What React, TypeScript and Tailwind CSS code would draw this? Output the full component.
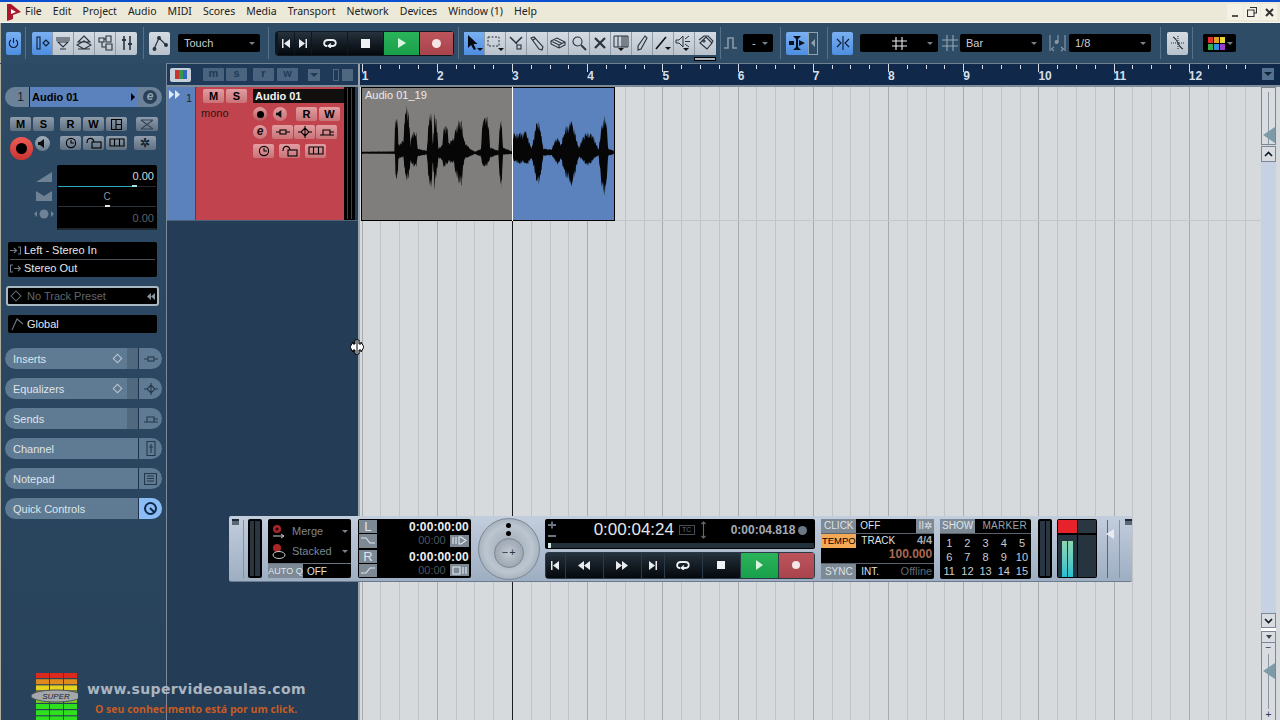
import type { ReactNode } from "react";

const bars = Array.from({ length: 12 }, (_, i) => i + 1);
const subs = [0, 1, 2, 3];
const menu = ["File", "Edit", "Project", "Audio", "MIDI", "Scores", "Media", "Transport", "Network", "Devices", "Window (1)", "Help"];

// envelope of the clip, [x, top, bottom]
const env: number[][] = [
  [20, 215, 221], [118, 214, 222], [120, 110, 225], [122, 105, 318], [128, 95, 300], [130, 190, 240], [145, 180, 230], [150, 80, 290],
  [155, 68, 310], [162, 90, 300], [166, 190, 250], [170, 155, 258], [184, 155, 262], [188, 205, 230], [215, 212, 224], [222, 100, 320],
  [228, 85, 335], [234, 190, 250], [238, 90, 340], [244, 100, 300], [250, 205, 235], [262, 190, 245], [268, 125, 270], [276, 130, 255],
  [282, 185, 250], [296, 170, 250], [305, 130, 300], [312, 105, 325], [320, 120, 320], [328, 180, 240], [345, 205, 230], [360, 215, 222],
  [378, 205, 232], [382, 120, 260], [392, 95, 265], [400, 110, 255], [405, 200, 235], [430, 212, 224], [435, 115, 320], [440, 112, 332],
  [444, 200, 225], [470, 214, 222], [472, 160, 240], [490, 155, 255], [512, 152, 250], [518, 165, 258], [530, 205, 235], [542, 130, 300],
  [550, 115, 322], [558, 150, 290], [565, 205, 228], [590, 208, 226], [600, 175, 245], [606, 168, 258], [618, 190, 240], [628, 150, 280],
  [640, 125, 310], [650, 120, 322], [660, 150, 290], [672, 205, 230], [682, 165, 245], [700, 152, 262], [716, 165, 240], [730, 208, 226],
  [742, 120, 340], [748, 95, 365], [754, 120, 320], [760, 205, 228], [778, 212, 222],
];

function wavePoints() {
  const top: string[] = [];
  const bot: string[] = [];
  for (let i = 0; i < env.length - 1; i++) {
    const [x0, t0, b0] = env[i];
    const [x1, t1, b1] = env[i + 1];
    for (let x = x0; x < x1; x += 1.5) {
      const k = (x - x0) / (x1 - x0);
      const t = t0 + (t1 - t0) * k;
      const b = b0 + (b1 - b0) * k;
      const j = Math.sin(x * 2.3) * 0.6 + Math.sin(x * 0.71) * 0.4;
      top.push(`${x},${(t + Math.abs(j) * (216 - t) * 0.42).toFixed(1)}`);
      bot.unshift(`${x},${(b - Math.abs(j) * (b - 220) * 0.42).toFixed(1)}`);
    }
  }
  return [...top, ...bot].join(" ");
}

function Ico({ w = 16, h = 16, children, className = "" }: { w?: number; h?: number; children: ReactNode; className?: string }) {
  return (
    <svg width={w} height={h} viewBox={`0 0 ${w} ${h}`} fill="none" stroke="currentColor" strokeWidth="1.1" className={className}>
      {children}
    </svg>
  );
}

function Sep({ ml }: { ml: string }) {
  return <div className={`w-px h-[32px] bg-[#56708a] ${ml}`} />;
}

function Drop({ w, ml, children }: { w: string; ml: string; children?: ReactNode }) {
  return (
    <div className={`h-[18px] bg-black rounded-[2px] flex items-center pl-[6px] pr-[5px] text-[11px] text-[#c9ced4] ${w} ${ml}`}>
      <div className="flex-1 flex items-center">{children}</div>
      <div className="w-0 h-0 border-x-[3.5px] border-x-transparent border-t-[3px] border-t-[#77818c]" />
    </div>
  );
}

function TB({ on, children, last }: { on?: boolean; children: ReactNode; last?: boolean }) {
  return (
    <div
      className={`w-[21px] h-[23px] flex items-center justify-center ${last ? "" : "border-r border-[#8e9aa7]"} ${
        on ? "bg-gradient-to-b from-[#7ab0f2] to-[#4d8ee0] text-[#0b1c33]" : "bg-gradient-to-b from-[#d5dbe2] to-[#b9c2cc] text-[#27333f]"
      }`}
    >
      {children}
    </div>
  );
}

function Toolbar() {
  return (
    <div className="h-[40px] shrink-0 bg-[#2f4c67] border-l border-[#b1ad9b] flex items-center">
      <div className="ml-[5px] w-[15px] h-[23px] rounded-[2px] bg-gradient-to-b from-[#7ab0f2] to-[#4d8ee0] flex items-center justify-center text-[#0b1c33]">
        <Ico w={11} h={12}>
          <path d="M3 3 A4.2 4.2 0 1 0 8 3 M5.5 1 V6" />
        </Ico>
      </div>
      <Sep ml="ml-[4px]" />
      <div className="ml-[6px] flex rounded-[2px] overflow-hidden">
        <TB on>
          <Ico>
            <path d="M3 2 H6 V14 H3 Z" />
            <path d="M9 8 L12 5 L15 8 L12 11 Z" />
          </Ico>
        </TB>
        <TB>
          <Ico>
            <path d="M1 3 H15 M1 5 H15 M3 7 L13 7 L8 12 Z M5 14 H11" />
          </Ico>
        </TB>
        <TB>
          <Ico>
            <path d="M8 1 L14 7 H2 Z M1 10 L8 6 L15 10 L8 14 Z M2 14 H14" />
          </Ico>
        </TB>
        <TB>
          <Ico>
            <path d="M2 3 H7 V7 H2 Z M9 1 H14 V7 H9 Z M9 9 H15 V15 H9 Z M5 7 V12 H9 M7 4 H9" />
          </Ico>
        </TB>
        <TB last>
          <Ico>
            <path d="M5 1 V15 M11 1 V15" strokeWidth="1.6" />
            <path d="M3 5 H7 M9 9 H13" strokeWidth="2" />
          </Ico>
        </TB>
      </div>
      <Sep ml="ml-[6px]" />
      <div className="ml-[5px] rounded-[2px] overflow-hidden flex">
        <TB last>
          <Ico>
            <path d="M2 14 L7 3 L14 10" strokeWidth="1.2" />
            <circle cx="2.5" cy="14" r="1.4" fill="currentColor" />
            <circle cx="7" cy="3" r="1.4" fill="currentColor" />
            <circle cx="14" cy="10" r="1.4" fill="currentColor" />
          </Ico>
        </TB>
      </div>
      <Drop w="w-[82px]" ml="ml-[8px]">
        Touch
      </Drop>
      <Sep ml="ml-[8px]" />
      <div className="ml-[6px] w-[179px] h-[25px] rounded-[4px] bg-[#0d1721] flex items-stretch p-px gap-px overflow-hidden">
        <div className="w-[16px] ml-[2px] bg-gradient-to-b from-[#26323d] to-[#05090d] flex items-center justify-center">
          <svg width="10" height="9" viewBox="0 0 10 9" fill="#e8ecf0">
            <path d="M1 0 H2.5 V9 H1 Z M9 0 V9 L3 4.5 Z" />
          </svg>
        </div>
        <div className="w-[16px] bg-gradient-to-b from-[#26323d] to-[#05090d] flex items-center justify-center">
          <svg width="10" height="9" viewBox="0 0 10 9" fill="#e8ecf0">
            <path d="M9 0 H7.5 V9 H9 Z M1 0 V9 L7 4.5 Z" />
          </svg>
        </div>
        <div className="w-[35px] bg-gradient-to-b from-[#26323d] to-[#05090d] flex items-center justify-center">
          <Loop />
        </div>
        <div className="w-[35px] bg-gradient-to-b from-[#26323d] to-[#05090d] flex items-center justify-center">
          <div className="w-[9px] h-[9px] bg-[#f0f2f4]" />
        </div>
        <div className="w-[35px] bg-gradient-to-b from-[#2bb35a] to-[#17a04b] flex items-center justify-center">
          <div className="w-0 h-0 border-y-[5px] border-y-transparent border-l-[8px] border-l-[#d8f5e0]" />
        </div>
        <div className="flex-1 bg-gradient-to-b from-[#bd545c] to-[#a8444c] flex items-center justify-center">
          <div className="w-[9px] h-[9px] rounded-full bg-[#f4e6e6]" />
        </div>
      </div>
      <Sep ml="ml-[4px]" />
      <div className="ml-[5px] relative flex">
        <TB on>
          <svg width="18" height="18" viewBox="0 0 18 18" fill="#060a10">
            <path d="M3 1 L3 14 L6 11 L9 16 L11 15 L8.5 10 L12.5 10 Z" />
            <path d="M12 14 H18 L15 17 Z" />
          </svg>
        </TB>
        <TB>
          <svg width="18" height="18" viewBox="0 0 18 18" fill="none" stroke="#27333f">
            <path d="M2 3 H13 V12 H2 Z" strokeDasharray="2 1.5" />
            <path d="M12 14 H18 L15 17 Z" fill="#111" stroke="none" />
          </svg>
        </TB>
        <TB>
          <Ico>
            <path d="M2 2 L9 9 M14 2 L8 8" strokeWidth="1.5" />
            <rect x="9" y="10" width="4" height="4" />
          </Ico>
        </TB>
        <TB>
          <Ico>
            <path d="M2 3 L5 2 L14 12 L13 15 L10 14 Z M4 5 L7 3" />
          </Ico>
        </TB>
        <TB>
          <Ico>
            <path d="M1 6 L7 3 L15 7 L15 10 L9 13 L1 9 Z M1 6 L9 10 L15 7 M9 10 V13 M4 4.5 L12 8.5" />
          </Ico>
        </TB>
        <TB>
          <Ico>
            <circle cx="6.5" cy="6.5" r="4.5" />
            <path d="M10 10 L15 15" strokeWidth="1.8" />
          </Ico>
        </TB>
        <TB>
          <Ico>
            <path d="M3 3 L13 13 M13 3 L3 13" strokeWidth="2.2" />
          </Ico>
        </TB>
        <TB>
          <svg width="18" height="18" viewBox="0 0 18 18" fill="none" stroke="#27333f">
            <path d="M2 2 V13 M6 2 V13 M10 2 V13 M12 2 V13 M14 2 V13 M16 2 V13 M2 2 H16 M2 13 H16" />
            <path d="M6 14 H12 L9 17 Z" fill="#111" stroke="none" />
          </svg>
        </TB>
        <TB>
          <Ico>
            <path d="M11 1 L13 3 L7 14 L4 15 L4 11 Z" />
          </Ico>
        </TB>
        <TB>
          <svg width="18" height="18" viewBox="0 0 18 18" fill="none" stroke="#111">
            <path d="M2 15 L12 3" strokeWidth="1.6" />
            <path d="M11 13 H17 L14 16 Z" fill="#111" stroke="none" />
          </svg>
        </TB>
        <TB>
          <svg width="18" height="18" viewBox="0 0 18 18" fill="none" stroke="#27333f">
            <path d="M1 6 H4 L8 2 V13 L4 9 H1 Z M10 5 L14 2 M10 7.5 H15 M10 10 L14 13" />
            <path d="M8 14 H14 L11 17 Z" fill="#111" stroke="none" />
          </svg>
        </TB>
        <TB last>
          <Ico>
            <path d="M2 8 L8 2 L14 8 L9 14 Z M1 5 L6 1 H10 L15 6 L13 9" />
            <circle cx="6" cy="6" r="1" />
          </Ico>
        </TB>
        <div className="absolute right-0 top-[25px] w-[22px] h-[4px] bg-[#a9b2bb] border border-black" />
      </div>
      <Sep ml="ml-[4px]" />
      <div className="ml-[3px] w-[14px] text-[#8a99a8]">
        <Ico w={14} h={16}>
          <path d="M0 13 H4 V3 H9 V13 H13" strokeWidth="1.6" />
        </Ico>
      </div>
      <Drop w="w-[30px]" ml="ml-[5px]">
        <span className="ml-[3px]">-</span>
      </Drop>
      <Sep ml="ml-[7px]" />
      <div className="ml-[5px] w-[22px] h-[23px] rounded-l-[2px] bg-gradient-to-b from-[#7ab0f2] to-[#4d8ee0] flex items-center justify-center">
        <svg width="18" height="16" viewBox="0 0 18 16" fill="#07121f">
          <path d="M5 1 H13 L10 4 V12 L13 15 H5 L8 12 V4 Z M1 8 L1 6 H6 V10 H1 Z M11 5 L17 8 L11 11 Z" />
        </svg>
      </div>
      <div className="w-[10px] h-[23px] border border-[#8fa0b1] flex items-center justify-center">
        <div className="w-0 h-0 border-y-[4px] border-y-transparent border-r-[4px] border-r-[#8fa0b1]" />
      </div>
      <Sep ml="ml-[9px]" />
      <div className="ml-[4px] w-[21px] h-[23px] rounded-[2px] bg-gradient-to-b from-[#7ab0f2] to-[#4d8ee0] flex items-center justify-center text-[#0b1c33]">
        <Ico w={14} h={14}>
          <path d="M7 0 V14 M1 3 L5 7 L1 11 M13 3 L9 7 L13 11" />
        </Ico>
      </div>
      <Drop w="w-[78px]" ml="ml-[7px]">
        <div className="w-full flex justify-center text-[#e8ecf0] pl-[6px]">
          <Ico w={15} h={13}>
            <path d="M4 0 V13 M10 0 V13 M0 4 H15 M0 9 H15" />
          </Ico>
        </div>
      </Drop>
      <div className="ml-[4px] text-[#98a5b2]">
        <Ico w={16} h={16}>
          <path d="M5 0 V16 M11 0 V16 M0 5 H16 M0 11 H16" />
        </Ico>
      </div>
      <Drop w="w-[82px]" ml="ml-[2px]">
        Bar
      </Drop>
      <div className="ml-[7px] text-[#8a99a8]">
        <Ico w={17} h={18}>
          <path d="M1 1 V17 M16 1 V17 M5 13 L2.5 15 L5 17 M12 13 L14.5 15 L12 17 M9 1 V8" />
          <circle cx="7.6" cy="8" r="1.5" fill="currentColor" />
        </Ico>
      </div>
      <Drop w="w-[82px]" ml="ml-[3px]">
        1/8
      </Drop>
      <Sep ml="ml-[9px]" />
      <div className="ml-[6px] w-[21px] h-[23px] rounded-[2px] bg-gradient-to-b from-[#d5dbe2] to-[#b9c2cc] flex items-center justify-center text-[#27333f]">
        <Ico>
          <path d="M1 8 H15" strokeDasharray="1 1" />
          <path d="M8 1 V15" strokeDasharray="1 1" />
          <path d="M3 2 C8 4 8 12 13 14" />
        </Ico>
      </div>
      <Sep ml="ml-[4px]" />
      <div className="ml-[10px] w-[33px] h-[18px] bg-black rounded-[2px] flex items-center pl-[5px] gap-[2px]">
        <div className="grid grid-cols-3 gap-px">
          <div className="w-[5px] h-[6px] bg-[#e0312c]" />
          <div className="w-[5px] h-[6px] bg-[#d9a32a]" />
          <div className="w-[5px] h-[6px] bg-[#e6d83a]" />
          <div className="w-[5px] h-[6px] bg-[#2fb04a]" />
          <div className="w-[5px] h-[6px] bg-[#2f8fe0]" />
          <div className="w-[5px] h-[6px] bg-[#9a3fd0]" />
        </div>
        <div className="w-0 h-0 border-x-[3px] border-x-transparent border-t-[3px] border-t-[#77818c]" />
      </div>
    </div>
  );
}

function Loop({ color = "#eef1f4" }: { color?: string }) {
  return (
    <svg width="16" height="10" viewBox="0 0 16 10" fill="none" stroke={color} strokeWidth="1.8">
      <path d="M5 8 C1 8 1 2 6 2 H10 C15 2 15 8 10 8 H7" />
      <path d="M9 5.5 L6 8 L9 10" strokeWidth="1.2" />
    </svg>
  );
}

function Mini({ w, red, children }: { w: string; red?: boolean; children: ReactNode }) {
  return (
    <div
      className={`h-[14px] rounded-[2px] flex items-center justify-center text-[11px] font-bold text-black ${w} ${
        red ? "bg-gradient-to-b from-[#e29da1] to-[#c97378]" : "bg-gradient-to-b from-[#8f9dac] to-[#5f7081]"
      }`}
    >
      {children}
    </div>
  );
}

const MiniInsert = () => (
  <Ico w={14} h={10}>
    <path d="M0 5 H4 M10 5 H14" />
    <rect x="4" y="3" width="6" height="4" />
  </Ico>
);
const MiniEq = () => (
  <Ico w={14} h={12}>
    <path d="M7 0 V12 M3 6 L7 2 L11 6 L7 10 Z M0 6 H3 M11 6 H14" />
  </Ico>
);
const MiniSend = () => (
  <Ico w={14} h={10}>
    <path d="M0 8 H14 M3 8 V3 H10 V8 M10 5 H14" />
  </Ico>
);
const MiniClock = () => (
  <Ico w={12} h={12}>
    <circle cx="6" cy="6" r="4.6" />
    <path d="M6 3 V6 H9" />
  </Ico>
);
const MiniLock = () => (
  <Ico w={16} h={12}>
    <rect x="6" y="5" width="9" height="6" />
    <path d="M1 6 C1 0 7 0 8 5" />
  </Ico>
);
const MiniFrames = () => (
  <Ico w={16} h={10}>
    <path d="M1 1 H15 V8 H1 Z M5.5 1 V8 M10.5 1 V8" />
  </Ico>
);

function PanelPill({ label, diamond, shade, on, icon }: { label: string; diamond?: boolean; shade?: boolean; on?: boolean; icon: ReactNode }) {
  return (
    <div className="h-[21px] mb-[9px] rounded-full overflow-hidden flex bg-[#5f7a93] text-[11px] text-[#dde4ea] leading-[20px]">
      <div className="flex-1 pl-[8px] flex items-center justify-between">
        <span>{label}</span>
        {diamond && <div className="w-[7px] h-[7px] rotate-45 border border-[#bcc7d1] mr-[6px]" />}
      </div>
      {shade && <div className="w-[11px] bg-[#51697f]" />}
      <div className={`w-[24px] border-l border-[#1e3349] flex items-center justify-center ${on ? "bg-[#8cbcf5] text-[#0e2a48]" : "text-[#25384a]"}`}>{icon}</div>
    </div>
  );
}

function Inspector() {
  return (
    <div className="w-[166px] shrink-0 border-l border-[#b1ad9b] bg-gradient-to-b from-[#2d4a65] to-[#28425b] pl-[4px] pr-[4px] pt-[23px] relative">
      <div className="h-[20px] rounded-full overflow-hidden flex bg-[#6c8299] text-[12px] text-black">
        <div className="w-[25px] border-r border-[#10253a] text-right pr-[5px] leading-[20px] text-[#152535]">1</div>
        <div className="w-[108px] bg-[#5b82bc] font-bold text-[11px] pl-[2px] flex items-center justify-between pr-[3px]">
          Audio 01
          <div className="w-0 h-0 border-y-[4px] border-y-transparent border-l-[4px] border-l-black" />
        </div>
        <div className="flex-1 flex items-center justify-center">
          <div className="w-[14px] h-[14px] rounded-full bg-[#2a4058] text-[#8fa3b6] text-[12px] italic font-bold leading-[13px] text-center">e</div>
        </div>
      </div>
      <div className="mt-[10px] ml-[5px] flex gap-[6px]">
        <div className="flex gap-[2px]">
          <Mini w="w-[21px]">M</Mini>
          <Mini w="w-[21px]">S</Mini>
        </div>
        <div className="flex gap-[2px]">
          <Mini w="w-[21px]">R</Mini>
          <Mini w="w-[21px]">W</Mini>
          <Mini w="w-[21px]">
            <Ico w={11} h={11}>
              <path d="M0.5 0.5 H10.5 V10.5 H0.5 Z M5 0.5 V10.5 M5 5.5 H10.5" />
            </Ico>
          </Mini>
        </div>
        <Mini w="w-[22px] ml-[3px]">
          <span className="text-[#34475a]">
            <Ico w={16} h={11}>
              <path d="M2 1 H14 M2 10 H14 M2 1 L14 10 M14 1 L2 10" />
            </Ico>
          </span>
        </Mini>
      </div>
      <div className="mt-[5px] ml-[5px] flex items-start h-[26px]">
        <div className="mt-[1px] w-[23px] h-[23px] rounded-full bg-gradient-to-b from-[#f05a56] to-[#c93431] flex items-center justify-center">
          <div className="w-[11px] h-[11px] rounded-full bg-black" />
        </div>
        <div className="ml-[2px] w-[15px] h-[15px] rounded-full bg-gradient-to-b from-[#a3afbc] to-[#6b7b8c] flex items-center justify-center">
          <svg width="9" height="9" viewBox="0 0 9 9" fill="#0a0f14">
            <path d="M0 3 H2 L6 0 V9 L2 6 H0 Z" />
          </svg>
        </div>
        <div className="ml-[10px] flex gap-[2px] text-[#2e4052]">
          <Mini w="w-[21px]">
            <MiniClock />
          </Mini>
          <Mini w="w-[21px]">
            <MiniLock />
          </Mini>
          <Mini w="w-[21px]">
            <MiniFrames />
          </Mini>
        </div>
        <div className="ml-[7px]">
          <Mini w="w-[22px]">
            <span className="text-[#17242f] text-[12px]">✲</span>
          </Mini>
        </div>
      </div>
      <div className="mt-[3px] flex">
        <div className="w-[52px] pt-[7px] pl-[26px] flex flex-col items-center gap-[8px]">
          <svg width="16" height="10" viewBox="0 0 16 10" fill="#6e8195">
            <path d="M0 10 L16 0 V10 Z" />
          </svg>
          <svg width="16" height="10" viewBox="0 0 16 10" fill="#6e8195" className="mt-[1px]">
            <path d="M0 0 L8 5 L16 0 V10 H0 Z" />
          </svg>
          <svg width="20" height="10" viewBox="0 0 20 10" fill="#6e8195">
            <path d="M0 5 L3 2 V8 Z M20 5 L17 2 V8 Z" />
            <circle cx="10" cy="5" r="4.5" />
          </svg>
        </div>
        <div className="w-[100px] h-[65px] bg-black rounded-[2px] text-[11px] flex flex-col px-px">
          <div className="h-[21px] leading-[22px] text-right pr-[2px] text-[#d5dade]">0.00</div>
          <div className="h-px bg-[#22282e] relative">
            <div className="absolute left-0 top-0 w-[76px] h-px bg-[#2fa9b8]" />
            <div className="absolute left-[74px] top-[-1px] w-[5px] h-[2px] bg-[#a8e0ea]" />
          </div>
          <div className="h-[19px] leading-[20px] text-center text-[#8a949c] text-[10px]">C</div>
          <div className="h-px bg-[#2a323a] relative">
            <div className="absolute left-[47px] top-[-1px] w-[5px] h-[2px] bg-[#e6e6e6]" />
          </div>
          <div className="h-[18px] leading-[22px] text-right pr-[2px] text-[#5a6268]">0.00</div>
          <div className="h-[2px] mt-auto bg-[#1e262d]" />
        </div>
      </div>
      <div className="mt-[12px] ml-[3px] mr-[5px] h-[35px] bg-black rounded-[2px] text-[11px] text-[#e4e8ec] px-[2px] flex flex-col">
        <div className="h-[18px] border-b border-[#4a4f55] flex items-center gap-[3px]">
          <span className="text-[#6f7a85] w-[11px]">
            <Ico w={11} h={9}>
              <path d="M0 4.5 H6 M4 2 L6.5 4.5 L4 7 M8 1 H10.5 V8 H8" />
            </Ico>
          </span>
          Left - Stereo In
        </div>
        <div className="h-[17px] flex items-center gap-[3px]">
          <span className="text-[#6f7a85] w-[11px]">
            <Ico w={11} h={9}>
              <path d="M3 1 H0.5 V8 H3 M4 4.5 H10 M8 2 L10.5 4.5 L8 7" />
            </Ico>
          </span>
          Stereo Out
        </div>
      </div>
      <div className="mt-[9px] ml-px mr-[3px] h-[20px] bg-black border-2 border-[#a9b9c4] rounded-[3px] text-[11px] text-[#5e666e] flex items-center pl-[3px] pr-[2px]">
        <div className="w-[8px] h-[8px] rotate-45 border border-[#5f6971] ml-[1px] mr-[7px]" />
        <span className="flex-1">No Track Preset</span>
        <svg width="8" height="7" viewBox="0 0 8 7" fill="#8a949c">
          <path d="M4 0 V7 L0 3.5 Z M8 0 V7 L4 3.5 Z" />
        </svg>
      </div>
      <div className="mt-[9px] ml-[3px] mr-[5px] h-[18px] bg-black rounded-[2px] text-[11px] text-[#e4e8ec] flex items-center gap-[3px] pl-[2px]">
        <span className="text-[#6d7782]">
          <Ico w={14} h={14}>
            <path d="M2 13 L7 2 L13 7" />
          </Ico>
        </span>
        Global
      </div>
      <div className="mt-[15px]">
        <PanelPill label="Inserts" diamond shade icon={<MiniInsert />} />
        <PanelPill label="Equalizers" diamond shade icon={<MiniEq />} />
        <PanelPill label="Sends" shade icon={<MiniSend />} />
        <PanelPill
          label="Channel"
          icon={
            <Ico w={10} h={15}>
              <path d="M1 0.5 H9 V14.5 H1 Z M5 3 V12 M3 6 H7" />
            </Ico>
          }
        />
        <PanelPill
          label="Notepad"
          icon={
            <Ico w={13} h={12}>
              <path d="M0.5 0.5 H12.5 V11.5 H0.5 Z M3 3 H10 M3 5.5 H10 M3 8 H10" />
            </Ico>
          }
        />
        <PanelPill
          label="Quick Controls"
          on
          icon={
            <svg width="15" height="15" viewBox="0 0 15 15" fill="none" stroke="currentColor" strokeWidth="2">
              <circle cx="7.5" cy="7.5" r="5.5" />
              <path d="M7 7 L11 11" />
            </svg>
          }
        />
      </div>
    </div>
  );
}

function HeadBtn({ children }: { children: ReactNode }) {
  return <div className="w-[21px] h-[13px] rounded-[1px] bg-[#4a6480] text-[#1e3a58] text-[11px] font-bold leading-[11px] text-center">{children}</div>;
}

function TrackColumn() {
  return (
    <div className="w-[194px] shrink-0 flex flex-col bg-[#243c55] border-l border-[#7a8a9a] border-r-2 border-r-[#9aa5ae]">
      <div className="h-[21px] shrink-0 bg-[#1e3a58] flex items-center">
        <div className="ml-[3px] w-[21px] h-[14px] rounded-[2px] bg-[#c7d0da] flex items-center justify-center">
          <div className="w-[4px] h-[9px] bg-[#c93431]" />
          <div className="w-[4px] h-[9px] bg-[#2f9a4a]" />
          <div className="w-[4px] h-[9px] bg-[#3a64c0]" />
        </div>
        <div className="ml-[12px] flex gap-[2px]">
          <HeadBtn>m</HeadBtn>
          <HeadBtn>s</HeadBtn>
        </div>
        <div className="ml-[6px] flex gap-[3px]">
          <HeadBtn>r</HeadBtn>
          <HeadBtn>w</HeadBtn>
        </div>
        <div className="ml-[10px] w-[12px] h-[12px] bg-[#4f6880] flex items-center justify-center">
          <div className="w-0 h-0 border-x-[4px] border-x-transparent border-t-[4px] border-t-[#1e3a58]" />
        </div>
        <div className="ml-[13px] w-[6px] h-[12px] border border-[#4f6880]" />
        <div className="ml-[3px] w-[11px] h-[12px] bg-[#4f6880]" />
      </div>
      <div className="h-[2px] shrink-0 bg-[#7e8c99]" />
      <div className="h-[134px] shrink-0 flex border-b border-[#4e6378]">
        <div className="w-[29px] bg-[#5b82bc] border-r border-[#2d4a67] relative text-[11px] text-[#1a2733]">
          <svg width="12" height="9" viewBox="0 0 12 9" fill="#dbe8f5" className="absolute left-[2px] top-[3px]">
            <path d="M0 0 L5 4.5 L0 9 Z M6 0 L11 4.5 L6 9 Z" />
          </svg>
          <span className="absolute right-[3px] top-[3px]">1</span>
        </div>
        <div className="w-[148px] bg-[#c0434d] pt-[2px]">
          <div className="flex items-center">
            <div className="ml-[7px] flex gap-[2px]">
              <Mini red w="w-[21px]">
                M
              </Mini>
              <Mini red w="w-[21px]">
                S
              </Mini>
            </div>
            <div className="ml-[6px] flex-1 h-[14px] bg-[#12100f] text-[#f1f1f1] font-bold text-[11px] leading-[14px] pl-[2px]">Audio 01</div>
          </div>
          <div className="flex items-start mt-[4px]">
            <span className="ml-[5px] text-[11px] text-[#2a1616] w-[52px] mt-[-2px]">mono</span>
            <div className="w-[14px] h-[14px] rounded-full bg-gradient-to-b from-[#e29da1] to-[#b7565d] flex items-center justify-center">
              <div className="w-[7px] h-[7px] rounded-full bg-black" />
            </div>
            <div className="ml-[6px] w-[14px] h-[14px] rounded-full bg-gradient-to-b from-[#e29da1] to-[#c97378] flex items-center justify-center">
              <svg width="8" height="8" viewBox="0 0 9 9" fill="#0a0f14">
                <path d="M0 3 H2 L6 0 V9 L2 6 H0 Z" />
              </svg>
            </div>
            <div className="ml-[9px] flex gap-[2px]">
              <Mini red w="w-[21px]">
                R
              </Mini>
              <Mini red w="w-[21px]">
                W
              </Mini>
            </div>
          </div>
          <div className="flex items-center mt-[3px] pl-[57px] text-[#3a1a1c]">
            <div className="w-[14px] h-[14px] rounded-full bg-gradient-to-b from-[#e29da1] to-[#c97378] text-center text-[12px] italic font-bold leading-[13px] text-[#1c0a0a]">e</div>
            <div className="ml-[5px] flex gap-[1px]">
              <Mini red w="w-[21px]">
                <MiniInsert />
              </Mini>
              <Mini red w="w-[21px]">
                <MiniEq />
              </Mini>
              <Mini red w="w-[21px]">
                <MiniSend />
              </Mini>
            </div>
          </div>
          <div className="flex mt-[5px] ml-[57px] gap-[5px] text-[#3a1a1c]">
            <Mini red w="w-[21px]">
              <MiniClock />
            </Mini>
            <Mini red w="w-[21px]">
              <MiniLock />
            </Mini>
            <Mini red w="w-[21px]">
              <MiniFrames />
            </Mini>
          </div>
        </div>
        <div className="w-[11px] bg-black flex justify-center gap-[3px] py-px">
          <div className="w-px bg-[#39444d]" />
          <div className="w-px bg-[#39444d]" />
        </div>
      </div>
    </div>
  );
}

function Arrange() {
  return (
    <div className="flex-1 min-w-0 flex flex-col relative">
      <div className="h-[21px] shrink-0 bg-[#10294a] flex">
        <div className="w-[901px] overflow-hidden flex pl-[1.7px]">
          {bars.map((b) => (
            <div key={b} className="w-[75.2px] shrink-0 h-full flex relative">
              {subs.map((s) => (
                <div key={s} className="w-[18.8px] shrink-0">
                  <div className={`w-px bg-[#d4dbe2] ${s === 0 ? "h-[8px]" : "h-[4px] mt-[1px]"}`} />
                </div>
              ))}
              <span className="absolute left-0 top-[5px] text-[12px] font-bold text-[#d5dfe9] leading-[15px]">{b}</span>
            </div>
          ))}
        </div>
        <div className="flex-1 pt-[4px] pl-[1px]">
          <div className="w-[12px] h-[12px] bg-[#53708e] flex items-center justify-center">
            <div className="w-0 h-0 border-x-[4px] border-x-transparent border-t-[4px] border-t-[#0e2238]" />
          </div>
        </div>
      </div>
      <div className="h-[2px] shrink-0 bg-[#7e8c99]" />
      <div className="flex-1 min-h-0 flex">
        <div className="w-[901px] relative overflow-hidden bg-[#d6dadd]">
          <div className="absolute inset-0 flex pl-[1.7px]">
            {bars.map((b) => (
              <div key={b} className="w-[75.2px] shrink-0 flex">
                {subs.map((s) => (
                  <div key={s} className={`w-[18.8px] shrink-0 border-l ${s === 0 ? "border-[#a7abaf]" : "border-[#c0c4c7]"}`} />
                ))}
              </div>
            ))}
          </div>
          <div className="absolute left-0 right-0 top-[133px] h-px bg-[#c3c7ca]" />
          <div className="absolute left-[1px] top-0 w-[254px] h-[134px] border border-black flex overflow-hidden">
            <div className="w-[150px] bg-[#7f7e7d] relative">
              <span className="absolute left-[3px] top-0 text-[11px] leading-[14px] text-[#eceae8]">Audio 01_19</span>
            </div>
            <div className="flex-1 bg-[#5b82bc]" />
            <svg width="252" height="132" viewBox="21 24 756 396" className="absolute left-0 top-0">
              <polygon points={wavePoints()} fill="#060606" />
            </svg>
          </div>
          <div className="absolute left-[152px] top-0 w-px h-[134px] bg-white" />
          <div className="absolute left-[152px] top-[134px] bottom-0 w-px bg-[#1c1c1c]" />
        </div>
        <RightScroll />
      </div>
    </div>
  );
}

function Tri() {
  return <div className="w-0 h-0 border-y-[8px] border-y-transparent border-r-[12px] border-r-[#7d9aa8]" />;
}

function RightScroll() {
  return (
    <div className="flex-1 bg-[#d6dadd] flex flex-col">
      <div className="w-[15px] h-[58px] bg-[#d9dde1] border border-[#7c8794] flex flex-col items-center relative">
        <div className="w-px flex-1 bg-[#8a949e] mt-[4px]" />
        <div className="absolute right-0 bottom-[1px]">
          <Tri />
        </div>
      </div>
      <div className="w-[15px] h-[16px] bg-[#d9dde1] border border-[#7c8794] mt-px flex items-center justify-center">
        <svg width="9" height="6" viewBox="0 0 9 6" fill="none" stroke="#0c1a28" strokeWidth="1.6">
          <path d="M1 5 L4.5 1.5 L8 5" />
        </svg>
      </div>
      <div className="w-[15px] flex-1 bg-[#c6d2e3]" />
      <div className="w-[15px] h-[15px] bg-[#d9dde1] border border-[#7c8794] flex items-center justify-center">
        <svg width="9" height="6" viewBox="0 0 9 6" fill="none" stroke="#0c1a28" strokeWidth="1.6">
          <path d="M1 1 L4.5 4.5 L8 1" />
        </svg>
      </div>
      <div className="w-[15px] h-[3px] bg-white" />
      <div className="w-[15px] h-[12px] bg-[#d9dde1] border border-[#7c8794] flex items-center justify-center">
        <div className="w-0 h-0 border-x-[3px] border-x-transparent border-t-[4px] border-t-[#3a4855]" />
      </div>
      <div className="w-[15px] h-[77px] bg-[#d9dde1] border-x border-[#7c8794] flex flex-col items-center relative text-[#2a3642] text-[10px] leading-[8px]">
        <span className="mt-[1px]">−</span>
        <div className="w-px flex-1 bg-[#8a949e] my-[2px]" />
        <span className="mb-[1px]">+</span>
        <div className="absolute right-0 top-[20px]">
          <Tri />
        </div>
      </div>
    </div>
  );
}

function LocRow({ k, icon, time, sub, subIcon }: { k: string; icon: ReactNode; time: string; sub: string; subIcon: ReactNode }) {
  return (
    <div className="flex-1 flex">
      <div className="w-[18px] flex flex-col gap-px">
        <div className="flex-1 bg-[#7d8a96] text-[#dfe5ea] text-[13px] leading-[13px] text-center">{k}</div>
        <div className="flex-1 bg-[#7d8a96] text-[#dfe5ea] flex items-center justify-center">{icon}</div>
      </div>
      <div className="flex-1 flex flex-col items-end pr-px">
        <span className="text-[12px] font-bold leading-[14px] text-[#eceff2] tracking-[0.1px]">{time}</span>
        <div className="flex items-center gap-[4px]">
          <span className="text-[11px] leading-[13px] text-[#4d5760]">{sub}</span>
          <div className="w-[19px] h-[12px] bg-[#7d8a96] text-[#e6ebef] flex items-center justify-center">{subIcon}</div>
        </div>
      </div>
    </div>
  );
}

function TpBtn({ w, children, cls = "from-[#26323d] to-[#05090d]" }: { w: string; children: ReactNode; cls?: string }) {
  return <div className={`${w} h-full bg-gradient-to-b ${cls} rounded-[1px] flex items-center justify-center`}>{children}</div>;
}

function MarkerGrid() {
  const nums = Array.from({ length: 15 }, (_, i) => i + 1);
  return (
    <div className="grid grid-cols-5 text-[11px] leading-[14px] text-[#c8ccd0] mt-[2px]">
      {nums.map((n) => (
        <span key={n} className="text-center">
          {n}
        </span>
      ))}
    </div>
  );
}

function TransportPanel() {
  return (
    <div className="absolute left-[229px] top-[516px] w-[903px] h-[66px] rounded-[2px] bg-gradient-to-b from-[#c3cedd] to-[#9eaec2] border-b border-[#6b7a8c] flex items-center font-['Liberation_Sans',sans-serif]">
      <div className="w-[14px] self-start pt-[3px] pl-[3px]">
        <div className="w-[7px] h-[6px] border-t-2 border-[#1f2a35] bg-[#5a6875]" />
      </div>
      <div className="w-px h-[58px] bg-[#8492a3]" />
      <div className="ml-[4px] w-[14px] h-[59px] bg-black rounded-[2px] flex justify-center gap-px p-[2px]">
        <div className="flex-1 bg-[#2a3642]" />
        <div className="flex-1 bg-[#2a3642]" />
      </div>
      <div className="ml-[6px] w-[83px] h-[59px] bg-black rounded-[2px] flex flex-col text-[11px] text-[#7c8791]">
        <div className="mt-[2px] h-[21px] flex items-center pl-[4px] pr-[3px]">
          <svg width="14" height="16" viewBox="0 0 14 16" fill="none" className="mr-[6px]">
            <circle cx="5" cy="5" r="4" fill="#a8262a" />
            <circle cx="5" cy="5" r="1.5" fill="#220808" />
            <path d="M1 12 H12 M9 10 L12 12 L9 14" stroke="#c8ccd0" />
          </svg>
          <span className="flex-1">Merge</span>
          <div className="w-0 h-0 border-x-[3px] border-x-transparent border-t-[3px] border-t-[#77818c]" />
        </div>
        <div className="h-[19px] flex items-center pl-[4px] pr-[3px]">
          <svg width="14" height="16" viewBox="0 0 14 16" fill="none" className="mr-[6px]">
            <circle cx="5" cy="4" r="4" fill="#a8262a" />
            <ellipse cx="7" cy="11" rx="6" ry="3.5" stroke="#c8ccd0" />
          </svg>
          <span className="flex-1">Stacked</span>
          <div className="w-0 h-0 border-x-[3px] border-x-transparent border-t-[3px] border-t-[#77818c]" />
        </div>
        <div className="mt-auto h-[15px] border-t border-[#6b747c] flex items-center">
          <div className="w-[35px] h-full bg-[#7d8a96] text-[#dfe5ea] text-[9px] text-center leading-[14px] whitespace-nowrap">AUTO Q</div>
          <span className="ml-[4px] text-[#dfe3e6] text-[10px]">OFF</span>
        </div>
      </div>
      <div className="ml-[7px] w-[113px] h-[59px] bg-black rounded-[2px] flex flex-col p-px gap-[2px]">
        <LocRow
          k="L"
          icon={
            <Ico w={14} h={9}>
              <path d="M0 2 H5 L9 7 H14" />
            </Ico>
          }
          time="0:00:00:00"
          sub="00:00"
          subIcon={
            <Ico w={15} h={9}>
              <path d="M1 1 V8 M4 1 V8 M7 1 V8 H9 L14 4.5 L9 1 Z" />
            </Ico>
          }
        />
        <LocRow
          k="R"
          icon={
            <Ico w={14} h={9}>
              <path d="M0 7 H5 L9 2 H14" />
            </Ico>
          }
          time="0:00:00:00"
          sub="00:00"
          subIcon={
            <Ico w={15} h={9}>
              <path d="M1 1 H8 V8 H1 Z M11 1 V8 M14 1 V8" />
            </Ico>
          }
        />
      </div>
      <div className="ml-[7px] w-[62px] h-[62px] rounded-full bg-[radial-gradient(circle,#9aa5b1_0%,#bcc6d1_55%,#87929f_100%)] border border-[#7b8796] flex flex-col items-center relative">
        <div className="w-[5px] h-[5px] rounded-full bg-black mt-[4px]" />
        <div className="w-[5px] h-[5px] rounded-full bg-black mt-[3px]" />
        <div className="w-[30px] h-[30px] mt-[2px] rounded-full bg-[radial-gradient(circle,#c3cad2_0%,#8e9aa6_100%)] border border-[#7b8796] flex items-center justify-center gap-[1px] text-[#2a3642] text-[11px] leading-none">
          <span>−</span>
          <span>+</span>
        </div>
      </div>
      <div className="ml-[5px] w-[271px] h-[60px] flex flex-col">
        <div className="h-[30px] bg-black rounded-[2px] relative flex items-start">
          <div className="w-[12px] ml-[1px] mt-[2px] text-[#6c7884]">
            <Ico w={12} h={18}>
              <path d="M2 4 H10 M6 0.5 V7.5 M2 15 H10" strokeWidth="1.8" />
            </Ico>
          </div>
          <span className="ml-[36px] text-[17px] leading-[22px] text-[#e3e7eb] w-[82px] whitespace-nowrap">0:00:04:24</span>
          <span className="ml-[3px] mt-[6px] w-[16px] h-[10px] border border-[#444d55] text-[#626d76] text-[7px] leading-[8px] text-center">TC</span>
          <div className="ml-[6px] mt-[2px] text-[#626d76]">
            <Ico w={5} h={18}>
              <path d="M2.5 1 V17 M0.5 3 L2.5 1 L4.5 3 M0.5 15 L2.5 17 L4.5 15" />
            </Ico>
          </div>
          <span className="ml-[25px] text-[12px] font-bold leading-[22px] text-[#a3adb7]">0:00:04.818</span>
          <div className="ml-[3px] mt-[7px] w-[9px] h-[9px] rounded-full bg-[#6c7884]" />
          <div className="absolute left-[3px] right-[1px] bottom-[1px] h-[5px] bg-[#22303c] flex">
            <div className="w-[3px] bg-[#cfe9e4]" />
          </div>
        </div>
        <div className="mt-[3px] h-[27px] bg-[#2b3a47] rounded-[4px] flex p-px gap-px overflow-hidden">
          <TpBtn w="w-[19px]">
            <svg width="10" height="9" viewBox="0 0 10 9" fill="#e8ecf0">
              <path d="M1 0 H2.5 V9 H1 Z M9 0 V9 L3 4.5 Z" />
            </svg>
          </TpBtn>
          <TpBtn w="w-[37px]">
            <svg width="14" height="9" viewBox="0 0 14 9" fill="#e8ecf0">
              <path d="M7 0 V9 L1 4.5 Z M13 0 V9 L7 4.5 Z" />
            </svg>
          </TpBtn>
          <TpBtn w="w-[37px]">
            <svg width="14" height="9" viewBox="0 0 14 9" fill="#e8ecf0">
              <path d="M1 0 V9 L7 4.5 Z M7 0 V9 L13 4.5 Z" />
            </svg>
          </TpBtn>
          <TpBtn w="w-[22px]">
            <svg width="10" height="9" viewBox="0 0 10 9" fill="#e8ecf0">
              <path d="M9 0 H7.5 V9 H9 Z M1 0 V9 L7 4.5 Z" />
            </svg>
          </TpBtn>
          <TpBtn w="w-[37px]">
            <Loop />
          </TpBtn>
          <TpBtn w="w-[37px]">
            <div className="w-[8px] h-[8px] bg-[#f0f2f4]" />
          </TpBtn>
          <TpBtn w="w-[37px]" cls="from-[#2bb35a] to-[#17a04b]">
            <div className="w-0 h-0 border-y-[5px] border-y-transparent border-l-[7px] border-l-[#d8f5e0]" />
          </TpBtn>
          <TpBtn w="flex-1" cls="from-[#bd545c] to-[#a8444c]">
            <div className="w-[8px] h-[8px] rounded-full bg-[#f4e6e6]" />
          </TpBtn>
        </div>
      </div>
      <div className="ml-[6px] w-[113px] h-[60px] bg-black rounded-[2px] flex flex-col text-[10px] text-[#dfe3e6]">
        <div className="h-[15px] flex items-center border-b border-[#5a636b]">
          <div className="w-[35px] h-full bg-[#7d8a96] text-center leading-[14px]">CLICK</div>
          <span className="ml-[4px] flex-1">OFF</span>
          <div className="w-[18px] h-full bg-[#7d8a96] text-center leading-[14px]">II✲</div>
        </div>
        <div className="flex-1 flex flex-col">
          <div className="flex items-center h-[14px]">
            <div className="w-[35px] h-full bg-[#f5a955] text-black text-[9.5px] text-center leading-[14px]">TEMPO</div>
            <span className="ml-[5px] flex-1">TRACK</span>
            <span className="text-[11px] font-bold text-[#a3adb7] pr-[2px]">4/4</span>
          </div>
          <div className="text-right text-[12px] font-bold leading-[13px] pr-[2px] text-[#a8694f]">100.000</div>
        </div>
        <div className="h-[16px] flex items-center border-t border-[#5a636b]">
          <div className="w-[35px] h-full bg-[#7d8a96] text-center leading-[15px]">SYNC</div>
          <span className="ml-[5px] flex-1">INT.</span>
          <span className="text-[11px] text-[#5f6971] pr-[2px]">Offline</span>
        </div>
      </div>
      <div className="ml-[6px] w-[91px] h-[60px] bg-black rounded-[2px] flex flex-col text-[10px] text-[#7c8791]">
        <div className="h-[15px] flex items-center justify-between border-b border-[#5a636b] pr-[4px]">
          <div className="w-[35px] h-full bg-[#7d8a96] text-[#dfe5ea] text-center leading-[14px]">SHOW</div>
          <span className="text-[#9aa4ad] tracking-[0.3px]">MARKER</span>
        </div>
        <MarkerGrid />
      </div>
      <div className="ml-[7px] w-[14px] h-[59px] bg-black rounded-[2px] flex justify-center gap-px p-[2px]">
        <div className="flex-1 bg-[#2a3642]" />
        <div className="flex-1 bg-[#2a3642]" />
      </div>
      <div className="ml-[5px] w-[40px] h-[59px] bg-black rounded-[2px] p-px grid grid-cols-2 gap-x-px grid-rows-[13px_1fr] gap-y-[2px]">
        <div className="bg-[#e8222a]" />
        <div className="bg-[#2a3642]" />
        <div className="bg-[#26343f] flex justify-center gap-px pt-[6px]">
          <div className="w-[5px] bg-gradient-to-b from-[#8fd6b0] to-[#1dbfd0]" />
          <div className="w-[5px] bg-gradient-to-b from-[#8fd6b0] to-[#1dbfd0]" />
        </div>
        <div className="bg-[#26343f]" />
      </div>
      <div className="ml-[5px] w-[12px] h-[58px] flex flex-col items-center relative">
        <div className="w-px flex-1 bg-[#5a6875]" />
        <div className="absolute top-[9px] right-0">
          <div className="w-0 h-0 border-y-[5px] border-y-transparent border-r-[8px] border-r-[#e6ecf2]" />
        </div>
      </div>
      <div className="ml-[5px] w-px h-[58px] bg-[#8492a3]" />
      <div className="self-start pt-[3px] ml-[5px]">
        <div className="w-[7px] h-[6px] border-t-2 border-[#1f2a35] bg-[#5a6875]" />
      </div>
    </div>
  );
}

function Watermark() {
  return (
    <div className="absolute left-[36px] top-[672px] flex">
      <svg width="48" height="48" viewBox="0 0 48 48" className="-ml-[6px]">
        {["#d92a1d", "#e08a1e", "#e6d21e", "#e6d21e", "#7ed321", "#2fe01e", "#2fe01e", "#2fe01e"].map((c, i) => (
          <g key={i} fill={c}>
            <rect x="6" y={1 + i * 6.2} width="13" height="5" />
            <rect x="20" y={1 + i * 6.2} width="13" height="5" />
            <rect x="34" y={1 + i * 6.2} width="13" height="5" />
          </g>
        ))}
        <ellipse cx="26" cy="24" rx="25" ry="6" fill="#a3a8ad" stroke="#4e5358" />
        <text x="26" y="27" textAnchor="middle" fontSize="8" fontStyle="italic" fill="#1d2226" fontFamily="Liberation Sans">
          SUPER
        </text>
      </svg>
      <div className="ml-[9px] flex flex-col">
        <span className="mt-[9px] text-[14px] leading-[17px] font-bold text-[#aab5c0] font-['DejaVu_Sans',sans-serif] tracking-[0.35px]">www.supervideoaulas.com</span>
        <span className="mt-[4px] ml-[8px] text-[10.5px] leading-[14px] font-bold text-[#c65c22] font-['Open_Sans',sans-serif]">O seu conhecimento está por um click.</span>
      </div>
    </div>
  );
}

export default function App() {
  return (
    <div className="w-[1280px] h-[720px] relative overflow-hidden flex flex-col font-['Liberation_Sans',sans-serif] bg-[#2d4a65]">
      <div className="h-[2px] shrink-0 bg-[#0a4fd0]" />
      <div className="h-[21px] shrink-0 bg-[#ece9d8] border-b border-[#f8f6ec] flex items-center text-[10.5px] text-[#222] font-['Noto_Sans',sans-serif]">
        <svg width="17" height="18" viewBox="0 0 17 18" className="ml-[5px]">
          <path d="M2 1 H6 L16 9 L8 12 L8 16 L2 18 Z" fill="#a8182c" />
          <path d="M6 6 L11 9 L6 11 Z" fill="#fff" />
        </svg>
        <div className="ml-[3px] flex gap-[11px]">
          {menu.map((m) => (
            <span key={m}>{m}</span>
          ))}
        </div>
        <div className="ml-auto mr-[3px] flex gap-px text-[#333]">
          <div className="w-[16px] h-[16px] bg-[#f4f2e6] flex items-end justify-center pb-[3px]">
            <div className="w-[6px] h-[2px] bg-[#55524a]" />
          </div>
          <div className="w-[16px] h-[16px] bg-[#f4f2e6] flex items-center justify-center">
            <Ico w={10} h={10}>
              <path d="M3 0.5 H9.5 V6 H7 M0.5 3 H7 V9.5 H0.5 Z" />
            </Ico>
          </div>
          <div className="w-[16px] h-[16px] bg-[#f4f2e6] flex items-center justify-center">
            <Ico w={9} h={9}>
              <path d="M1 1 L8 8 M8 1 L1 8" strokeWidth="2" />
            </Ico>
          </div>
        </div>
      </div>
      <Toolbar />
      <div className="h-px shrink-0 bg-[#6d8094] ml-[166px]" />
      <div className="flex-1 min-h-0 flex">
        <Inspector />
        <TrackColumn />
        <Arrange />
      </div>
      <TransportPanel />
      <Watermark />
      <svg width="14" height="16" viewBox="0 0 14 16" className="absolute left-[350px] top-[339px]">
        <path d="M5 1 H9 V5 H11 V3 L14 8 L11 13 V11 H9 V15 H5 V11 H3 V13 L0 8 L3 3 V5 H5 Z" fill="#fff" stroke="#000" strokeWidth="1" />
        <path d="M7 2 V14" stroke="#000" />
      </svg>
    </div>
  );
}
